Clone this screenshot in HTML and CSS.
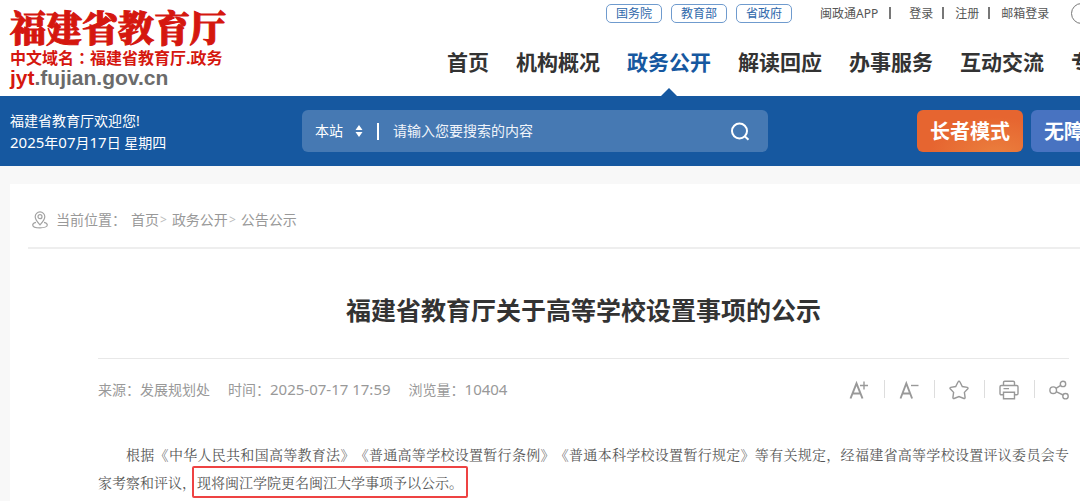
FILE: index.html
```html
<!DOCTYPE html>
<html lang="zh-CN">
<head>
<meta charset="utf-8">
<title>福建省教育厅关于高等学校设置事项的公示</title>
<link rel="stylesheet" href="styles.css">
</head>
<body>
<header class="header">
  <a class="logo" href="#">
    <span class="logo-name">福建省教育厅</span>
    <span class="logo-domain">中文域名<span class="logo-colon" lang="zh-TW">：</span>福建省教育厅.政务</span>
    <span class="logo-url"><span class="logo-url-mark">jyt</span>.fujian.gov.cn</span>
  </a>
  <div class="header-main">
    <div class="topline">
      <div class="pills">
        <a class="pill" href="#">国务院</a>
        <a class="pill" href="#">教育部</a>
        <a class="pill" href="#">省政府</a>
      </div>
      <div class="account">
        <a class="account-link" href="#">闽政通APP</a>
        <a class="account-link account-login" href="#">登录</a>
        <a class="account-link" href="#">注册</a>
        <a class="account-link" href="#">邮箱登录</a>
      </div>
      <input class="mini-search" type="text" aria-label="站内搜索">
    </div>
    <nav class="nav">
      <a class="nav-link" href="#">首页</a>
      <a class="nav-link" href="#">机构概况</a>
      <a class="nav-link nav-current" href="#">政务公开</a>
      <a class="nav-link" href="#">解读回应</a>
      <a class="nav-link" href="#">办事服务</a>
      <a class="nav-link" href="#">互动交流</a>
      <a class="nav-link" href="#">专题专栏</a>
    </nav>
  </div>
</header>

<div class="banner">
  <div class="welcome">
    <div>福建省教育厅欢迎您!</div>
    <div><span class="figures">2025</span>年<span class="figures">07</span>月<span class="figures">17</span>日 星期四</div>
  </div>
  <form class="search">
    <select class="search-scope" aria-label="搜索范围"><option>本站</option></select>
    <svg class="search-arrows" viewBox="0 0 8 12" aria-hidden="true"><path d="M4 0 7.5 5h-7zM4 12 .5 7h7z" fill="#fff"/></svg>
    <span class="search-rule"></span>
    <input class="search-input" type="text" placeholder="请输入您要搜索的内容" aria-label="搜索内容">
    <button class="search-button" type="button" aria-label="搜索">
      <svg class="search-icon" viewBox="0 0 20 20" fill="none" stroke="#fff" stroke-width="2"><circle cx="9.5" cy="10" r="7.5"/><path d="m15 15.500 3.500 3.200"/></svg>
    </button>
  </form>
  <div class="modes">
    <button class="mode mode-elder" type="button">长者模式</button>
    <button class="mode mode-access" type="button">无障碍</button>
  </div>
</div>

<main class="panel">
  <div class="crumbs">
    <svg class="crumb-icon" viewBox="0 0 16 18" fill="none" stroke="#a2a2a2" stroke-width="1.2" aria-hidden="true"><path d="M8 13.8C5.400 11 3.200 8.500 3.200 5.700a4.800 4.800 0 0 1 9.600 0C12.800 8.500 10.600 11 8 13.800z"/><circle cx="8" cy="5.700" r="2"/><path d="M4 11.300C2 11.800.700 12.700.700 13.900c0 1.800 3.200 2.900 7.300 2.900s7.300-1.100 7.300-2.900c0-1.200-1.300-2.100-3.300-2.600"/></svg>
    <span class="crumb-label">当前位置：</span>
    <a class="crumb" href="#">首页</a><span class="crumb-sep">&gt;</span>
    <a class="crumb" href="#">政务公开</a><span class="crumb-sep">&gt;</span>
    <a class="crumb" href="#">公告公示</a>
  </div>
  <article class="article">
    <h1 class="title">福建省教育厅关于高等学校设置事项的公示</h1>
    <div class="meta">
      <span>来源：发展规划处</span>
      <span>时间：<time class="figures">2025-07-17 17:59</time></span>
      <span>浏览量：<span class="figures">10404</span></span>
      <div class="tools">
        <button class="tool" type="button" aria-label="放大字号"><svg class="tool-icon" viewBox="0 0 20 20"><path d="m1.500 18.500 6-15 6 15M3.600 13.500h7.800" stroke-width="2"/><path d="M11 5.500h8M15 1.500v8"/></svg></button>
        <button class="tool" type="button" aria-label="缩小字号"><svg class="tool-icon" viewBox="0 0 20 20"><path d="m1.500 18.500 5.800-15 5.800 15M3.600 13.500h7.400" stroke-width="1.900"/><path d="M12 5.500h7.500"/></svg></button>
        <button class="tool" type="button" aria-label="收藏"><svg class="tool-icon" viewBox="0 0 20 20"><path d="M10 1.300q.7 0 1 .7l2.300 4.500 5 .9q1.200.4.500 1.300l-3.400 3.700.7 5.200q0 1.200-1.200.9L10 16.500l-4.900 2q-1.200.3-1.200-.9l.7-5.200-3.400-3.700q-.7-.9.500-1.300l5-.9L9 2q.3-.7 1-.7z"/></svg></button>
        <button class="tool" type="button" aria-label="打印"><svg class="tool-icon" viewBox="0 0 20 20"><path d="M4.500 5.500v-3q0-1.300 1.300-1.300h8.400q1.300 0 1.300 1.300v3M4.500 14.800H2.300Q1 14.800 1 13.500V6.800q0-1.300 1.300-1.300h15.400Q19 5.500 19 6.800v6.700q0 1.300-1.300 1.300h-2.200M4.500 12.300h11v6.400h-11zM4.500 8.600h5.500"/></svg></button>
        <button class="tool" type="button" aria-label="分享"><svg class="tool-icon" viewBox="0 0 20 20"><circle cx="4.200" cy="10.200" r="3.300"/><circle cx="14" cy="3.900" r="2.700"/><circle cx="16.500" cy="16.200" r="2.700"/><path d="m7 8.400 4.700-3M7.100 11.700l7 3.300"/></svg></button>
      </div>
    </div>
    <p class="text"><span class="text-line">根据《中华人民共和国高等教育法》《普通高等学校设置暂行条例》《普通本科学校设置暂行规定》等有关规定，经福建省高等学校设置评议委员会专</span>家考察和评议，<mark class="notice">现将闽江学院更名闽江大学事项予以公示。</mark></p>
  </article>
</main>
</body>
</html>
```
FILE: styles.css
```css
* { box-sizing: border-box; }

body {
  display: flex;
  flex-direction: column;
  min-height: 100vh;
  margin: 0;
  overflow: hidden;
  background: #f8f8f8;
  color: #333;
  font: 14px/22px "Noto Sans", "Noto Sans CJK SC", sans-serif;
}

a { color: inherit; text-decoration: none; }
button, input, select { font: inherit; color: inherit; }

.header {
  display: grid;
  flex: none;
  grid-template-columns: 437px minmax(0, 1fr);
  height: 96px;
  padding-left: 10px;
  background: #fff;
}

.logo {
  display: flex;
  flex-direction: column;
  padding-top: 7px;
  color: #d5170f;
  font-weight: 700;
  white-space: nowrap;
}
.logo-name {
  font: 900 36px/40px "Noto Serif CJK SC", "Noto Sans CJK SC", sans-serif;
  -webkit-text-stroke: 1px #d5170f;
}
.logo-domain {
  font-size: 16px;
  line-height: 20px;
}
.logo-colon { font-family: "Noto Sans CJK TC", sans-serif; }
.logo-url {
  color: #6b6b6b;
  font-family: "Liberation Sans", sans-serif;
  font-size: 21px;
  line-height: 20px;
}
.logo-url-mark { color: #d5170f; }

.topline {
  display: flex;
  align-items: center;
  height: 27px;
  padding-left: 159px;
  font-size: 12px;
  line-height: 18px;
  white-space: nowrap;
}
.pills { display: flex; gap: 9px; }
.pill {
  width: 56px;
  height: 19px;
  border: 1px solid #6f9bce;
  border-radius: 5px;
  color: #2f68ab;
  line-height: 17px;
  text-align: center;
}
.account {
  display: flex;
  align-items: center;
  margin-left: 28px;
}
.account-link { color: #555; }
.account-link + .account-link::before {
  content: "";
  display: inline-block;
  width: 2px;
  height: 12px;
  margin: 0 11px 0 9px;
  background: #777;
  vertical-align: -1px;
}
.account-link + .account-login::before { margin: 0 18px 0 11px; }
.mini-search {
  flex: none;
  width: 180px;
  height: 21px;
  margin-left: 22px;
  border: 1px solid #777;
  border-radius: 11px;
  background: #fff;
}

.nav {
  display: flex;
  gap: 27px;
  height: 69px;
  font-size: 21px;
  font-weight: 700;
  line-height: 71px;
  white-space: nowrap;
}
.nav-link { flex: none; }
.nav-current {
  position: relative;
  color: #1658a0;
}
.nav-current::after {
  content: "";
  position: absolute;
  bottom: 0;
  left: 50%;
  border: 8px solid transparent;
  border-top: 0;
  border-bottom-color: #1658a0;
  transform: translateX(-50%);
}

.banner {
  display: flex;
  flex: none;
  align-items: center;
  height: 70px;
  padding-left: 10px;
  background: #1658a0;
  color: #fff;
  white-space: nowrap;
}
.welcome {
  flex: none;
  width: 292px;
  padding-top: 2px;
}
.search {
  display: flex;
  flex: none;
  align-items: center;
  width: 466px;
  height: 42px;
  padding: 0 18px 0 13px;
  border-radius: 6px;
  background: #4679b3;
}
.search-scope {
  width: 28px;
  padding: 0;
  border: 0;
  background: transparent;
  appearance: none;
}
.search-arrows { width: 8px; height: 12px; margin-left: 12px; }
.search-rule {
  width: 2px;
  height: 17px;
  margin: 0 14px;
  background: #fff;
}
.search-input {
  flex: 1;
  min-width: 0;
  padding: 0;
  border: 0;
  background: transparent;
}
.search-input::placeholder { color: #f0f4fa; opacity: 1; }
.search-button {
  padding: 0;
  border: 0;
  background: transparent;
  line-height: 0;
}
.search-icon { width: 20px; height: 20px; }
.modes {
  display: flex;
  flex: none;
  gap: 8px;
  margin-left: 149px;
}
.mode {
  height: 42px;
  padding: 2px 13px 0;
  border: 0;
  border-radius: 6px;
  font-size: 20px;
  font-weight: 700;
  line-height: 40px;
}
.mode-elder { background: radial-gradient(ellipse at 75% 110%, #eb803e, #e66530 60%); }
.mode-access { background: #4873c1; }

.panel {
  flex: 1;
  margin: 18px 0 0 10px;
  padding-left: 18px;
  background: #fff;
}
.crumbs {
  display: flex;
  align-items: center;
  height: 65px;
  padding: 8px 0 0 4px;
  border-bottom: 2px solid #eee;
  color: #999;
}
.crumb-icon { width: 16px; height: 18px; }
.crumb-label { width: 75px; margin-left: 8px; }
.crumb-sep {
  margin: 0 5px 0 1px;
  color: #bbb;
  font-size: 12px;
}

.article { padding: 0 11px 0 70px; }
.title {
  margin: 0;
  padding: 42px 0 28px;
  border-bottom: 1px solid #e8e8e8;
  font-size: 25px;
  line-height: 39px;
  text-align: center;
}
.meta {
  display: flex;
  align-items: center;
  gap: 18px;
  height: 62px;
  color: #999;
}
.figures {
  font-size: 15px;
  line-height: 1;
}
.tools { display: flex; margin-left: auto; }
.tool {
  display: flex;
  padding: 0 0 0 15px;
  border: 0;
  background: transparent;
}
.tool + .tool::before {
  content: "";
  width: 1px;
  height: 18px;
  margin-right: 14px;
  background: #ddd;
}
.tool-icon {
  width: 20px;
  height: 20px;
  fill: none;
  stroke: #999;
  stroke-width: 1.4;
}

.text {
  margin: 19px 0 0;
  color: #555;
  font-family: "Noto Serif CJK SC", "Noto Sans CJK SC", serif;
  line-height: 28px;
  text-spacing-trim: space-all;
}
.text-line {
  display: block;
  text-align-last: justify;
  text-indent: 28px;
}
.notice {
  margin: 0 -4px;
  padding: 4px 3px;
  border: 2px solid #ee4343;
  border-radius: 2px;
  background: transparent;
  color: inherit;
}
```
